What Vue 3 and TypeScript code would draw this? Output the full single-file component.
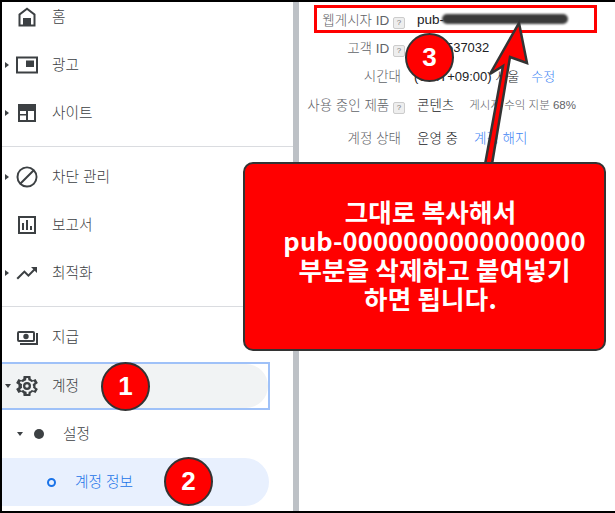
<script setup lang="ts">
interface NavItem {
  label: string
  icon: string
  arrow?: 'right' | 'down'
}
const groups: NavItem[][] = [
  [
    { label: '홈', icon: 'home' },
    { label: '광고', icon: 'ads', arrow: 'right' },
    { label: '사이트', icon: 'site', arrow: 'right' },
  ],
  [
    { label: '차단 관리', icon: 'block', arrow: 'right' },
    { label: '보고서', icon: 'report' },
    { label: '최적화', icon: 'trend', arrow: 'right' },
  ],
]
</script>

<template>
  <div class="frame">
    <aside class="side">
      <div class="nav">
        <template v-for="(group, g) in groups" :key="g">
          <div v-for="item in group" :key="item.label" class="row">
            <span class="caret" :class="item.arrow"></span>
            <svg class="ico" viewBox="0 0 24 24" fill="#3c4043">
              <path v-if="item.icon === 'home'" fill-rule="evenodd" d="M12 2.500 3.500 9V21.500H20.500V9ZM5.500 10 12 5l6.500 5V19.500H16V13H8V19.500H5.500Z" />
              <path v-if="item.icon === 'ads'" fill-rule="evenodd" d="M1 3.500H23V20.500H1ZM3 5.500V18.500H21V5.500ZM11 7.500H19V14H11Z" />
              <path v-if="item.icon === 'site'" fill-rule="evenodd" d="M3 3H21V21H3ZM5 10V19H11V14.500H5V13H11V10ZM13 10V19H19V10Z" />
              <path v-if="item.icon === 'block'" fill-rule="evenodd" d="M12 1.500a10.500 10.500 0 1 0 0 21 10.500 10.500 0 0 0 0-21ZM3.500 12a8.500 8.500 0 0 1 13.800-6.700L5.300 17.300A8.500 8.500 0 0 1 3.500 12Zm8.500 8.500a8.500 8.500 0 0 1-5.300-1.800L18.700 6.700A8.500 8.500 0 0 1 12 20.500Z" />
              <path v-if="item.icon === 'report'" fill-rule="evenodd" d="M3 3H21V21H3ZM5 5V19H19V5ZM7 10H9V17H7ZM11 7H13V17H11ZM15 13H17V17H15Z" />
              <path v-if="item.icon === 'trend'" d="M16 6l2.300 2.300-4.900 4.900-4-4L1.500 17 3 18.500l6.400-6.500 4 4 6.300-6.300L22 12V6Z" />
            </svg>
            <span class="label">{{ item.label }}</span>
          </div>
          <hr class="rule" />
        </template>
        <div class="row">
          <span class="caret"></span>
          <svg class="ico" viewBox="0 0 24 24" fill="#3c4043">
            <path fill-rule="evenodd" d="M4 6H18a2 2 0 0 1 2 2V15a2 2 0 0 1-2 2H4a2 2 0 0 1-2-2V8a2 2 0 0 1 2-2ZM4 8V15H18V8ZM11 8.800a2.700 2.700 0 1 0 0 5.400 2.700 2.700 0 0 0 0-5.400ZM21 8h2V20H5V18H21Z" />
          </svg>
          <span class="label">지급</span>
        </div>
        <div class="focus">
          <div class="row active">
            <span class="caret down"></span>
            <svg class="ico" viewBox="1.500 1.500 21 21" fill="#3c4043">
              <path fill-rule="evenodd" d="M19.400 13a7.500 7.500 0 0 0 0-2l2.100-1.600-2-3.500-2.500 1a7.600 7.600 0 0 0-1.700-1L15 3.300H9L8.700 5.900a7.600 7.600 0 0 0-1.700 1l-2.500-1-2 3.500L4.600 11a7.500 7.500 0 0 0 0 2l-2.100 1.600 2 3.500 2.500-1a7.600 7.600 0 0 0 1.700 1L9 20.700h6l.3-2.600a7.600 7.600 0 0 0 1.700-1l2.500 1 2-3.500ZM17.500 12c0 .5-.1 1-.2 1.500l1.700 1.300-.8 1.400-2-.8a5.600 5.600 0 0 1-2.700 1.600l-.3 2.100h-1.400l-.3-2.100a5.600 5.600 0 0 1-2.700-1.600l-2 .8-.8-1.400 1.700-1.300a5.600 5.600 0 0 1 0-3L5.700 9.200l.8-1.400 2 .8a5.600 5.600 0 0 1 2.700-1.600l.3-2.100h1.400l.3 2.100a5.600 5.600 0 0 1 2.700 1.600l2-.8.8 1.400-1.700 1.300c.1.500.2 1 .2 1.500ZM12 8.500a3.500 3.500 0 1 0 0 7 3.500 3.500 0 0 0 0-7Zm0 5a1.500 1.500 0 1 1 0-3 1.500 1.500 0 0 1 0 3Z" />
            </svg>
            <span class="label">계정</span>
          </div>
        </div>
        <div class="row sub">
          <span class="caret down"></span>
          <span class="dot"></span>
          <span class="label">설정</span>
        </div>
        <div class="row leaf">
          <span class="ring"></span>
          <span class="label">계정 정보</span>
        </div>
      </div>
      <div class="gutter"></div>
    </aside>

    <main class="info">
      <dl class="fields">
        <div class="field">
          <dt>웹게시자 ID <i class="q">?</i></dt>
          <dd class="pub">pub-<span class="blot"></span></dd>
        </div>
        <div class="field">
          <dt>고객 ID <i class="q">?</i></dt>
          <dd class="num">1234537032</dd>
        </div>
        <div class="field zone">
          <dt class="plain">시간대</dt>
          <dd>(GMT+09:00) 서울 <a class="link">수정</a></dd>
        </div>
        <div class="field prod">
          <dt>사용 중인 제품 <i class="q">?</i></dt>
          <dd>콘텐츠 <small class="share">게시자 수익 지분 68%</small></dd>
        </div>
        <div class="field state">
          <dt class="plain">계정 상태</dt>
          <dd>운영 중 <a class="link">계정 해지</a></dd>
        </div>
      </dl>
    </main>

    <div class="mark"></div>
    <svg class="arrow" viewBox="0 0 615 513">
      <path d="M484 170 503 66 490 74 519 23 527 63 510 57 491 170Z" fill="#f00" stroke="#333" stroke-width="2.500" stroke-linejoin="miter" />
    </svg>
    <div class="callout">
      <p class="l1">그대로 복사해서</p>
      <p class="l2 code">pub-0000000000000000</p>
      <p class="l2">부분을 삭제하고 붙여넣기</p>
      <p class="l1">하면 됩니다.</p>
    </div>
    <span class="badge b1">1</span>
    <span class="badge b2">2</span>
    <span class="badge b3">3</span>
  </div>
</template>

<style>
html, body { margin: 0; background: #000; }
</style>

<style scoped>
.frame {
  position: relative;
  box-sizing: border-box;
  width: 615px;
  height: 513px;
  border: solid #000;
  border-width: 2px 0 2px 2px;
  background: #fff;
  display: flex;
  overflow: hidden;
  font-family: "Liberation Sans", "Noto Sans CJK KR", sans-serif;
  color: #3c4043;
}
.side { display: flex; width: 297px; flex: none; }
.nav { flex: 1; margin-top: -9px; }
.gutter { width: 6px; background: #bdc1c6; flex: none; }
.row {
  display: flex;
  align-items: center;
  height: 48px;
  box-sizing: border-box;
}
.caret { width: 0; height: 0; margin-left: 3px; border: 3px solid transparent; flex: none; }
.caret.right { border-left: 4px solid #3c4043; border-right: 0; }
.caret.down { border-top: 4px solid #3c4043; border-bottom: 0; }
.caret:not(.right):not(.down) { border-width: 0 4px 0 0; }
.ico { width: 24px; height: 24px; margin-left: 6px; flex: none; }
.label { margin: -3px 0 0 13px; font-size: 14.700px; font-weight: 300; }
.rule { border: 0; height: 1px; background: #dadce0; margin: 9px 0 6px; }
.focus {
  width: 268px;
  height: 48px;
  margin-top: 1px;
  box-sizing: border-box;
  border: solid #9fc1f8;
  border-width: 2px 2px 2px 0;
}
.active {
  height: 100%;
  background: #f1f3f4;
  border-radius: 0 24px 24px 0;
}
.active .caret { margin-right: -2px; }
.sub .caret { margin-left: 15px; }
.dot { width: 10px; height: 10px; border-radius: 50%; background: #3c4043; margin-left: 11px; flex: none; }
.sub .label { margin-left: 19px; }
.leaf {
  width: 267px;
  background: #e8f0fe;
  border-radius: 0 24px 24px 0;
  color: #1a73e8;
}
.ring {
  width: 5px;
  height: 5px;
  border: 2.500px solid #1a73e8;
  border-radius: 50%;
  margin-left: 45px;
  flex: none;
}
.leaf .label { margin-left: 19px; }

.info { flex: 1; min-width: 0; }
.fields { margin: 0; padding-top: 3px; }
.field { display: flex; align-items: center; height: 28px; font-size: 13.500px; font-weight: 300; }
.prod { margin-top: 1px; }
.state { margin-top: 5px; }
dt { width: 106px; text-align: right; color: #5f6368; flex: none; white-space: nowrap; }
dt.plain { padding-right: 4px; width: 102px; }
dd { margin: 0 0 0 12px; color: #202124; white-space: nowrap; display: flex; align-items: center; gap: 12px; }
.zone dd { margin-left: 9px; font-size: 13px; }
.q {
  display: inline-block;
  width: 10px;
  height: 10px;
  border: 1px solid #ccc;
  border-radius: 2px;
  background: #eee;
  color: #777;
  font: 8px/10px "Liberation Sans", sans-serif;
  text-align: center;
}
.pub { gap: 0; }
.num { font-size: 13px; }
.blot { width: 126px; height: 10px; margin-left: -2px; border-radius: 5px; background: #3a3a3a; filter: blur(.800px); }
.link { color: #4285f4; }
.share { font-size: 11.500px; color: #5f6368; margin-left: 3px; }
.state .link { margin-left: 4px; }

.mark {
  position: absolute;
  left: 312px;
  top: 3px;
  width: 277px;
  height: 22px;
  border: 3px solid #f00;
}
.arrow { position: absolute; left: -2px; top: -2px; width: 615px; height: 513px; }
.callout {
  position: absolute;
  left: 241px;
  top: 160px;
  width: 363px;
  height: 189px;
  box-sizing: border-box;
  padding-bottom: 6px;
  background: #f00;
  border: 2px solid #333;
  border-radius: 10px;
  display: flex;
  flex-direction: column;
  align-items: center;
  justify-content: center;
  color: #fff;
  font-family: "Noto Sans CJK KR", "Liberation Sans", sans-serif;
  font-weight: 700;
  font-size: 25.500px;
  line-height: 29px;
  letter-spacing: .200px;
}
.callout p { margin: 0; white-space: nowrap; }
.callout .l1 { margin-left: 12px; }
.callout .l2 { margin-left: 20px; }
.callout .code { letter-spacing: .150px; }
.badge {
  position: absolute;
  width: 45px;
  height: 45px;
  border: 2px solid #333;
  border-radius: 50%;
  background: #f00;
  color: #fff;
  font: 700 26px/45px "Liberation Sans", sans-serif;
  text-align: center;
}
.b1 { left: 99px; top: 360px; }
.b2 { left: 162px; top: 455px; }
.b3 { left: 403px; top: 31px; }
</style>
